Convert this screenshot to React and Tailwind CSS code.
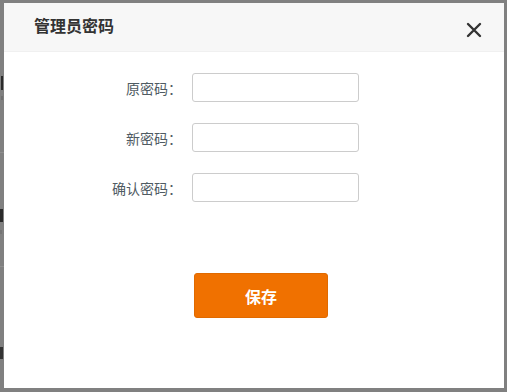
export default function App() {
  const font = { fontFamily: '"Noto Sans CJK SC", "Noto Sans", sans-serif' };
  const frag = (key, extra) => <div key={key} className={extra}></div>;
  return (
    <div className="relative w-[507px] h-[392px] overflow-hidden bg-[#808080]" style={font}>
      {/* dimmed page behind the dialog: only its left edge shows */}
      <div className="flex flex-col w-[4px] pt-[76px]">
        <div className="flex flex-col gap-[6px] h-[76px]">
          {frag("a", "w-[2px] h-[14px] ml-[1px] bg-[#2a2a2a]")}
          {frag("b", "w-[2px] h-[4px] ml-[1px] bg-[#707070]")}
        </div>
        <div className="h-px bg-[#8e8e8e]"></div>
        <div className="flex flex-col gap-[8px] pt-[56px] h-[113px]">
          {frag("c", "w-[3px] h-[13px] bg-[#2a2a2a]")}
          {frag("d", "w-[2px] h-[4px] bg-[#747474]")}
        </div>
        <div className="h-px bg-[#8e8e8e]"></div>
        <div className="pt-[80px]">{frag("e", "w-[3px] h-[12px] bg-[#333]")}</div>
      </div>

      <div className="absolute left-[4px] top-[3px] w-[500px] h-[385px] bg-white flex flex-col">
        <div className="h-[49px] bg-[#f7f7f7] border-b border-[#f0f0f0] flex items-center justify-between pl-[30px] pr-[22px]">
          <span className="text-[16px] font-bold text-[#333] leading-none mb-[4px]">管理员密码</span>
          <svg width="16" height="16" viewBox="0 0 16 16" className="mt-[5px]">
            <path d="M2 2 L14 14 M14 2 L2 14" stroke="#333" strokeWidth="2.4" strokeLinecap="round" />
          </svg>
        </div>

        <div className="flex flex-col gap-[21px] pt-[21px]">
          {["原密码：", "新密码：", "确认密码："].map((l) => (
            <div key={l} className="flex items-center pl-[88px]">
              <label className="w-[90px] text-right text-[14px] text-[#4f5b63] leading-none">{l}</label>
              <input
                type="password"
                className="ml-[10px] w-[167px] h-[29px] border border-[#cccccc] rounded-[3px] bg-white outline-none"
              />
            </div>
          ))}
        </div>

        <div className="pt-[71px] pl-[190px]">
          <button className="w-[134px] h-[45px] bg-[#f07100] border border-[#e06a00] rounded-[3px] text-white text-[16px] font-bold leading-none">
            保存
          </button>
        </div>
      </div>
    </div>
  );
}
